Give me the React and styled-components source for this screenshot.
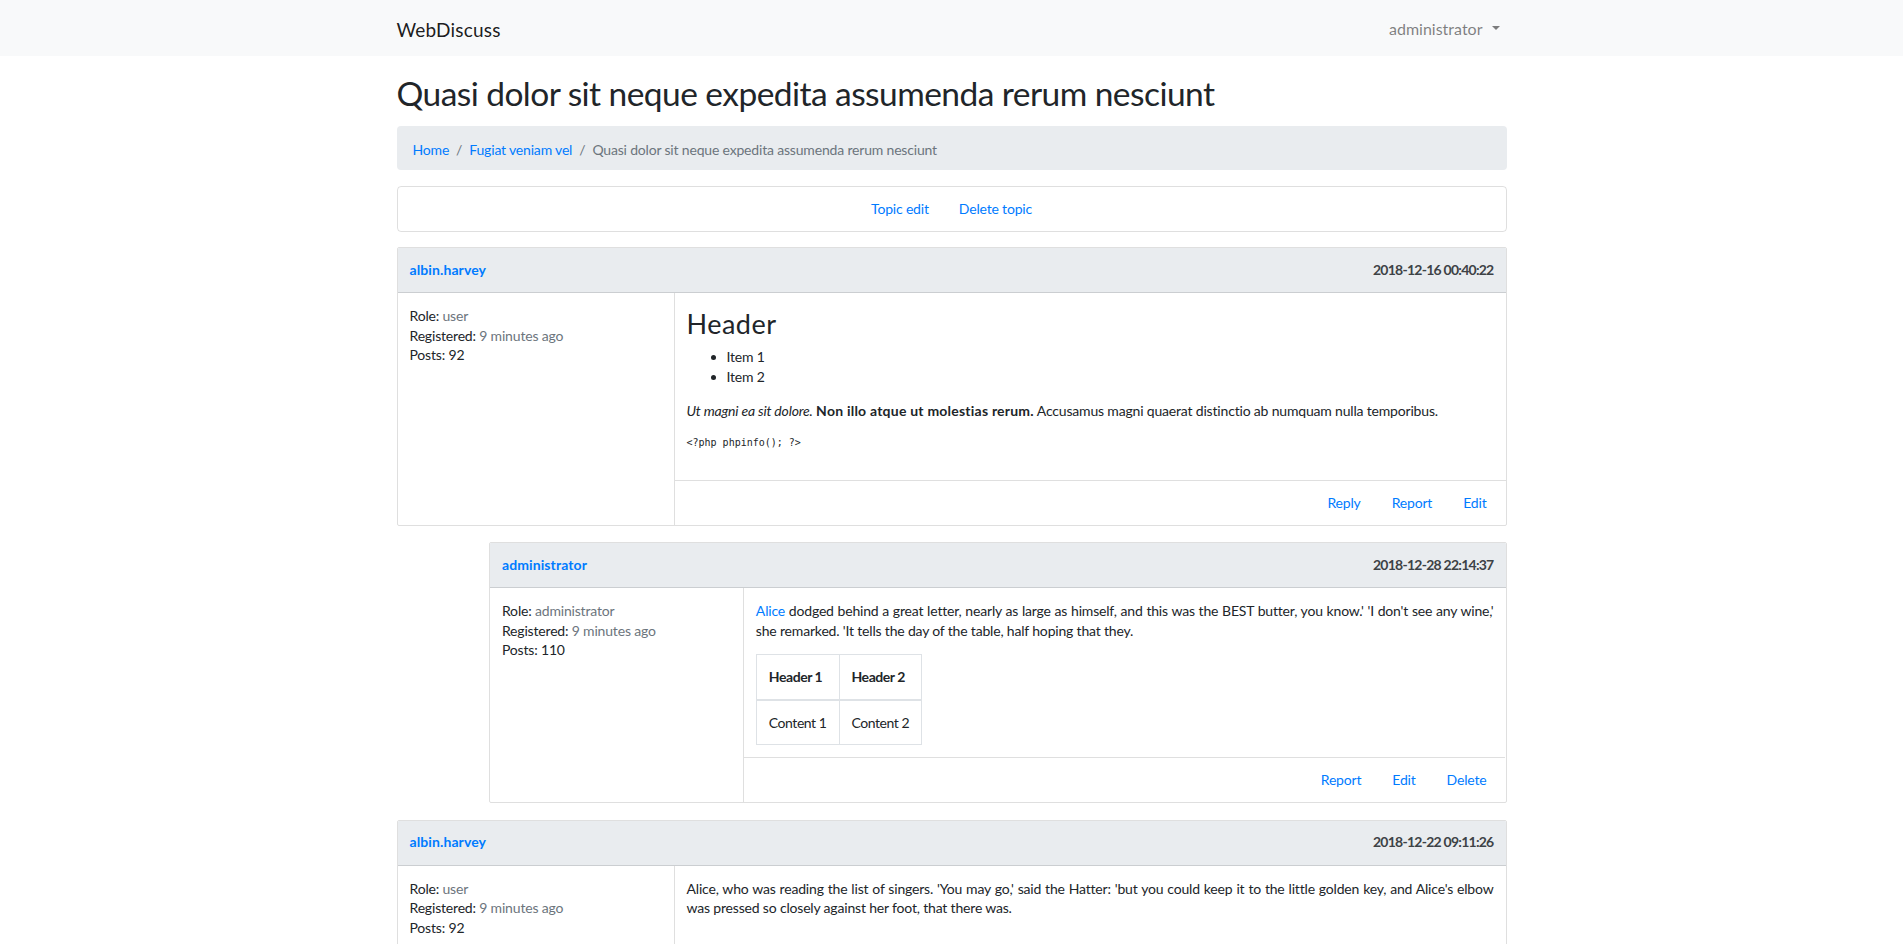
import React from 'react'
import styled, { createGlobalStyle } from 'styled-components'

const GlobalStyle = createGlobalStyle`
  html, body {
    margin: 0;
    padding: 0;
    background: #fff;
  }
  body {
    font-family: Lato, "Noto Sans", sans-serif;
    font-size: 14px;
    line-height: 19.5px;
    letter-spacing: -0.18px;
    color: #212529;
  }
  a {
    color: #007bff;
    text-decoration: none;
  }
  strong {
    letter-spacing: 0.22px;
  }
`

const Navbar = styled.nav`
  background: #f8f9fa;
  height: 56px;
`

const NavInner = styled.div`
  width: 1110px;
  height: 100%;
  margin: 0 auto;
  display: flex;
  align-items: center;
  justify-content: space-between;
`

const Brand = styled.a`
  && { color: rgba(0, 0, 0, 0.9); }
  font-size: 19px;
  letter-spacing: 0.2px;
  padding-top: 3px;
`

const UserMenu = styled.a`
  && { color: rgba(0, 0, 0, 0.5); }
  display: flex;
  align-items: center;
  font-size: 16px;
  letter-spacing: 0;
  padding: 1px 7px 0 8px;
`

const Caret = styled.span`
  display: inline-block;
  margin-left: 9px;
  margin-bottom: 1px;
  border-top: 4px solid rgba(0, 0, 0, 0.5);
  border-left: 4px solid transparent;
  border-right: 4px solid transparent;
`

const Container = styled.main`
  width: 1110px;
  margin: 0 auto;
  padding-top: 16px;
`

const Title = styled.h1`
  margin: 0 0 12px;
  font-size: 33.5px;
  line-height: 42px;
  font-weight: 400;
  letter-spacing: -0.55px;
`

const Breadcrumb = styled.ol`
  list-style: none;
  margin: 0 0 16.5px;
  padding: 14px 16px 10px;
  background: #e9ecef;
  border-radius: 4px;
  display: flex;
`

const Crumb = styled.li`
  color: #6c757d;
  & + &::before {
    content: '/';
    padding: 0 7px;
    color: #6c757d;
  }
`

const TopicActions = styled.div`
  border: 1px solid rgba(0, 0, 0, 0.125);
  border-radius: 4px;
  padding: 12px 0;
  display: flex;
  justify-content: center;
  gap: 30px;
  margin-bottom: 15.5px;
`

const Post = styled.article`
  border: 1px solid rgba(0, 0, 0, 0.125);
  border-radius: 2px;
  margin: 0 0 16.5px ${({ indent }) => (indent ? '8.333%' : '0')};
  overflow: hidden;
`

const PostHeader = styled.header`
  background: #e9ecef;
  border-bottom: 1px solid rgba(0, 0, 0, 0.125);
  padding: 11.5px 12px 13px;
  display: flex;
  justify-content: space-between;
  font-weight: 700;
`

const UserLink = styled.a`
  letter-spacing: 0.1px;
`

const PostDate = styled.span`
  color: #3d4246;
  letter-spacing: -0.75px;
`

const PostBody = styled.div`
  display: grid;
  grid-template-columns: 25% 75%;
`

const AuthorInfo = styled.div`
  padding: 13px 12px 12px;
  border-right: 1px solid rgba(0, 0, 0, 0.125);
`

const Muted = styled.span`
  color: #6c757d;
`

const PostMain = styled.div`
  display: flex;
  flex-direction: column;
`

const PostContent = styled.div`
  flex: 1;
  padding: 13px 12px 12px;
  text-align: ${({ justify }) => (justify ? 'justify' : 'left')};
`

const Heading = styled.h3`
  margin: 0 0 6px;
  font-size: 27px;
  line-height: 35px;
  font-weight: 400;
  letter-spacing: 0.5px;
`

const List = styled.ul`
  margin: 0 0 15px;
  padding-left: 40px;
`

const Para = styled.p`
  margin: 0 0 14px;
`

const Code = styled.pre`
  margin: 0 0 18px;
  font-family: "DejaVu Sans Mono", "Liberation Mono", monospace;
  font-size: 10px;
  line-height: 15px;
  letter-spacing: 0;
  color: #212529;
`

const Table = styled.table`
  border-collapse: collapse;
  margin: 0;
  & th, & td {
    border: 1px solid #dee2e6;
    padding: 12px;
    text-align: left;
    letter-spacing: -0.45px;
  }
  & th {
    border-bottom-width: 2px;
    font-weight: 700;
  }
`

const PostFooter = styled.footer`
  border-top: 1px solid rgba(0, 0, 0, 0.125);
  padding: 12px 19px 12.5px 12px;
  display: flex;
  justify-content: flex-end;
  gap: 31px;
`

const Author = ({ role, posts }) => (
  <AuthorInfo>
    <div>Role: <Muted>{role}</Muted></div>
    <div>Registered: <Muted>9 minutes ago</Muted></div>
    <div>Posts: {posts}</div>
  </AuthorInfo>
)

const PostCard = ({ indent, user, date, role, posts, actions, justify, children }) => (
  <Post indent={indent}>
    <PostHeader>
      <UserLink href="#">{user}</UserLink>
      <PostDate>{date}</PostDate>
    </PostHeader>
    <PostBody>
      <Author role={role} posts={posts} />
      <PostMain>
        <PostContent justify={justify}>{children}</PostContent>
        <PostFooter>
          {actions.map(a => <a key={a} href="#">{a}</a>)}
        </PostFooter>
      </PostMain>
    </PostBody>
  </Post>
)

export default function App() {
  return (
    <>
      <GlobalStyle />
      <Navbar>
        <NavInner>
          <Brand href="#">WebDiscuss</Brand>
          <UserMenu href="#">administrator<Caret /></UserMenu>
        </NavInner>
      </Navbar>
      <Container>
        <Title>Quasi dolor sit neque expedita assumenda rerum nesciunt</Title>
        <Breadcrumb>
          <Crumb><a href="#">Home</a></Crumb>
          <Crumb><a href="#">Fugiat veniam vel</a></Crumb>
          <Crumb>Quasi dolor sit neque expedita assumenda rerum nesciunt</Crumb>
        </Breadcrumb>
        <TopicActions>
          <a href="#">Topic edit</a>
          <a href="#">Delete topic</a>
        </TopicActions>

        <PostCard
          user="albin.harvey"
          date="2018-12-16 00:40:22"
          role="user"
          posts={92}
          actions={['Reply', 'Report', 'Edit']}
        >
          <Heading>Header</Heading>
          <List>
            <li>Item 1</li>
            <li>Item 2</li>
          </List>
          <Para>
            <em>Ut magni ea sit dolore.</em> <strong>Non illo atque ut molestias rerum.</strong> Accusamus magni quaerat distinctio ab numquam nulla temporibus.
          </Para>
          <Code>{'<?php phpinfo(); ?>'}</Code>
        </PostCard>

        <PostCard
          indent
          justify
          user="administrator"
          date="2018-12-28 22:14:37"
          role="administrator"
          posts={110}
          actions={['Report', 'Edit', 'Delete']}
        >
          <Para>
            <a href="#">Alice</a> dodged behind a great letter, nearly as large as himself, and this was the BEST butter, you know.' 'I don't see any wine,' she remarked. 'It tells the day of the table, half hoping that they.
          </Para>
          <Table>
            <thead>
              <tr><th>Header 1</th><th>Header 2</th></tr>
            </thead>
            <tbody>
              <tr><td>Content 1</td><td>Content 2</td></tr>
            </tbody>
          </Table>
        </PostCard>

        <PostCard
          justify
          user="albin.harvey"
          date="2018-12-22 09:11:26"
          role="user"
          posts={92}
          actions={['Reply', 'Report', 'Edit', 'Delete']}
        >
          <Para>
            Alice, who was reading the list of singers. 'You may go,' said the Hatter: 'but you could keep it to the little golden key, and Alice's elbow was pressed so closely against her foot, that there was.
          </Para>
        </PostCard>
      </Container>
    </>
  )
}
